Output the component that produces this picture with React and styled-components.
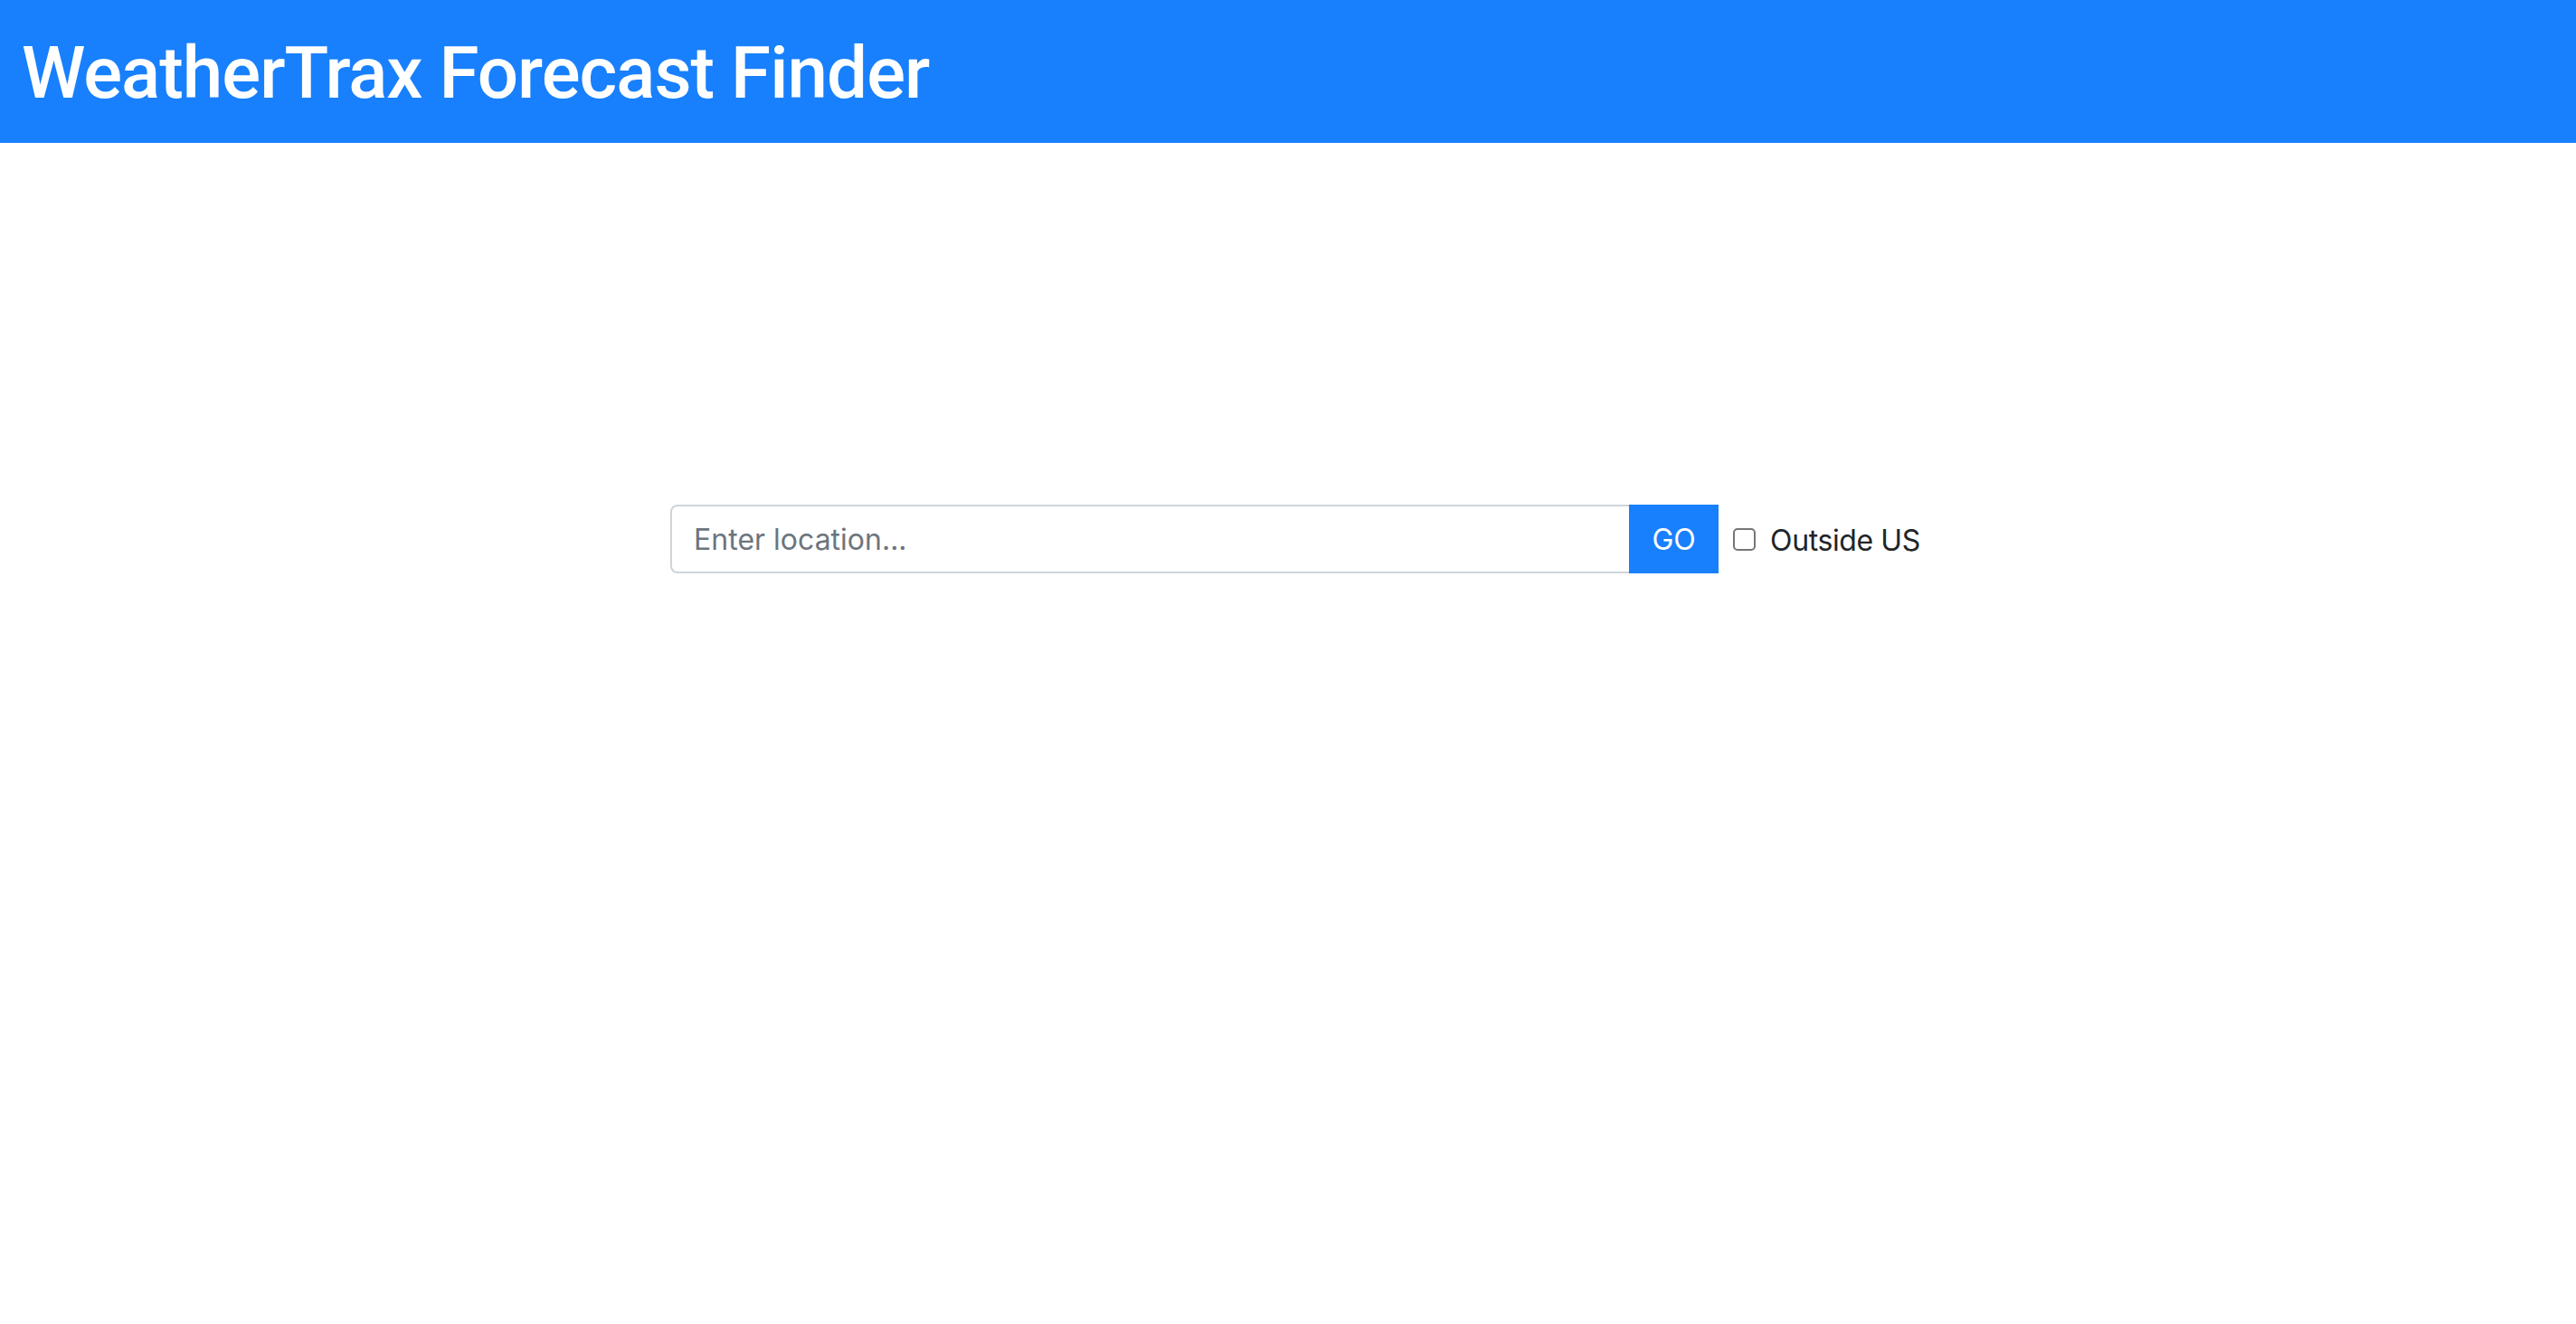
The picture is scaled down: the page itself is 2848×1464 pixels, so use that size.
import React from "react";
import styled, { createGlobalStyle } from "styled-components";

const GlobalStyle = createGlobalStyle`
  html, body {
    margin: 0;
    padding: 0;
    background: #ffffff;
    font-family: Inter, "Noto Sans", Roboto, sans-serif;
    color: #212529;
  }
  * { box-sizing: border-box; }
`;

const Header = styled.header`
  height: 158px;
  background: #1880fd;
  display: flex;
  align-items: center;
  padding: 4px 24px 0;
`;

const Title = styled.h1`
  margin: 0;
  color: #ffffff;
  font-family: Roboto, Inter, "Noto Sans", sans-serif;
  font-weight: 500;
  font-size: 80px;
  letter-spacing: -1px;
  line-height: 1;
`;

const Main = styled.main`
  display: flex;
  justify-content: center;
  padding: 400px 0 0 16px;
`;

const SearchRow = styled.form`
  display: flex;
  align-items: center;
`;

const InputGroup = styled.div`
  display: flex;
  align-items: stretch;
  height: 76px;
`;

const LocationInput = styled.input`
  width: 1060px;
  height: 100%;
  border: 2px solid #ced4da;
  border-right: none;
  border-radius: 8px 0 0 8px;
  padding: 0 24px;
  font-family: Inter, "Noto Sans", sans-serif;
  font-size: 32px;
  color: #212529;
  outline: none;
  &::placeholder {
    color: #6c757d;
  }
`;

const GoButton = styled.button`
  width: 99px;
  height: 100%;
  border: none;
  background: #1880fd;
  color: #ffffff;
  font-family: Inter, "Noto Sans", sans-serif;
  font-size: 32px;
  padding: 0;
  border-radius: 0;
`;

const CheckLabel = styled.label`
  display: flex;
  align-items: center;
  margin-left: 16px;
  gap: 16px;
  font-family: Inter, "Noto Sans", sans-serif;
  font-size: 32px;
  letter-spacing: -0.4px;
  color: #212529;
  padding-top: 3px;
`;

const CheckBox = styled.span`
  display: inline-block;
  width: 25px;
  height: 25px;
  border: 2px solid #767676;
  border-radius: 5px;
  background: #fff;
  margin-top: -2px;
`;

export default function App() {
  return (
    <>
      <GlobalStyle />
      <Header>
        <Title>WeatherTrax Forecast Finder</Title>
      </Header>
      <Main>
        <SearchRow onSubmit={(e) => e.preventDefault()}>
          <InputGroup>
            <LocationInput placeholder="Enter location..." />
            <GoButton type="submit">GO</GoButton>
          </InputGroup>
          <CheckLabel>
            <CheckBox />
            Outside US
          </CheckLabel>
        </SearchRow>
      </Main>
    </>
  );
}
